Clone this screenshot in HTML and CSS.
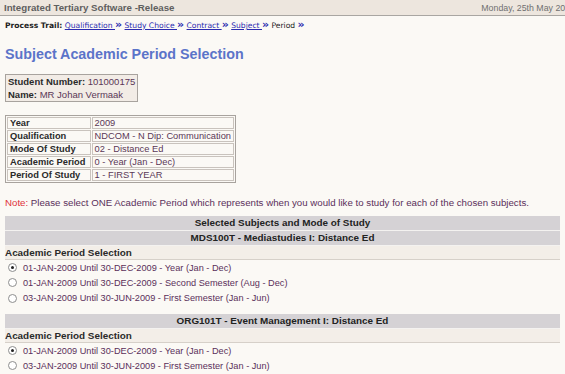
FILE: index.html
```html
<!DOCTYPE html>
<html>
<head>
	<meta charset="utf-8">
	<link rel="stylesheet" href="styles.css">
</head>
<body>
	<!-- top banner -->
	<div class="banner">
		<span class="app-name">Integrated Tertiary Software -Release</span>
		<span class="today">Monday, 25th May 2009</span>
	</div>

	<!-- process trail -->
	<div class="trail">
		<b>Process Trail:</b>
		<a href="#">Qualification </a><span class="arr">&raquo;</span>
		<a href="#">Study Choice </a><span class="arr">&raquo;</span>
		<a href="#">Contract </a><span class="arr">&raquo;</span>
		<a href="#">Subject </a><span class="arr">&raquo;</span>
		Period <span class="arr">&raquo;</span>
	</div>

	<h1>Subject Academic Period Selection</h1>

	<!-- student -->
	<table class="student">
		<tr><td><b>Student Number:</b> 101000175</td></tr>
		<tr><td><b>Name:</b> MR Johan Vermaak</td></tr>
	</table>

	<!-- enrolment info -->
	<table class="info">
		<tr><th>Year</th><td>2009</td></tr>
		<tr><th>Qualification</th><td>NDCOM - N Dip: Communication</td></tr>
		<tr><th>Mode Of Study</th><td>02 - Distance Ed</td></tr>
		<tr><th>Academic Period</th><td>0 - Year (Jan - Dec)</td></tr>
		<tr><th>Period Of Study</th><td>1 - FIRST YEAR</td></tr>
	</table>

	<p class="note"><span class="red">Note:</span> Please select ONE Academic Period which represents when you would like to study for each of the chosen subjects.</p>

	<!-- subjects -->
	<div class="subjects">
		<div class="bar">Selected Subjects and Mode of Study</div>
		<div class="bar">MDS100T - Mediastudies I: Distance Ed</div>
		<div class="sel-head">Academic Period Selection</div>
		<div class="opt"><span class="radio on"></span>01-JAN-2009 Until 30-DEC-2009 - Year (Jan - Dec)</div>
		<div class="opt"><span class="radio"></span>01-JAN-2009 Until 30-DEC-2009 - Second Semester (Aug - Dec)</div>
		<div class="opt"><span class="radio"></span>03-JAN-2009 Until 30-JUN-2009 - First Semester (Jan - Jun)</div>

		<div class="bar gap">ORG101T - Event Management I: Distance Ed</div>
		<div class="sel-head">Academic Period Selection</div>
		<div class="opt"><span class="radio on"></span>01-JAN-2009 Until 30-DEC-2009 - Year (Jan - Dec)</div>
		<div class="opt"><span class="radio"></span>03-JAN-2009 Until 30-JUN-2009 - First Semester (Jan - Jun)</div>
	</div>
</body>
</html>
```

FILE: styles.css
```css
body {
	margin: 0;
	background-color: #fbf9f5;
	font-family: "Liberation Sans", Arial, sans-serif;
	font-size: 9px;
	color: #222;
	overflow: hidden;
}

/* top banner */
.banner {
	display: flex;
	justify-content: space-between;
	align-items: center;
	height: 15px;
	padding-left: 4px;
	background-color: #ede6de;
	border-bottom: 1px solid #a9a6a2;
	white-space: nowrap;
	overflow: hidden;
}

.app-name {
	font-size: 9.7px;
	font-weight: bold;
	color: #5f5f5f;
}

.today {
	font-size: 8.8px;
	color: #707070;
	margin-right: -10px;
}

/* process trail */
.trail {
	font-family: "DejaVu Sans", Verdana, sans-serif;
	font-size: 7.6px;
	padding: 4px 0 0 5px;
	color: #222;
	height: 13px;
}

.trail a {
	color: #2b2bb0;
}

.trail .arr {
	font-weight: bold;
	font-size: 11px;
	line-height: 9px;
	color: #2b2bb0;
}

h1 {
	font-size: 14.3px;
	color: #5b74c9;
	margin: 11px 0 0 5px;
	line-height: 20px;
}

/* student box */
.student {
	margin: 10px 0 0 5px;
	border: 1px solid #a8a39e;
	background-color: #f2ece6;
	border-collapse: collapse;
	color: #5a3756;
}

.student td {
	padding: 0 2px;
	line-height: 13px;
	font-size: 9.5px;
}

.student b, .info th {
	color: #2a2a2a;
}

/* info table */
.info {
	margin: 13px 0 0 5px;
	border: 1px solid #a8a39e;
	border-spacing: 1px;
	color: #5a3756;
	width: 231px;
	font-size: 9.3px;
}

.info th, .info td {
	border: 1px solid #c9c3bd;
	padding: 0 2px;
	height: 10px;
	line-height: 10px;
	text-align: left;
	white-space: nowrap;
}

.info th {
	width: 78px;
}

.note {
	margin: 14px 0 0 5px;
	font-size: 9.7px;
	line-height: 12px;
	color: #5a2f5a;
	white-space: nowrap;
}

.red {
	color: #e0303a;
}

/* subjects */
.subjects {
	margin: 7px 5px 0 5px;
}

.bar {
	background-color: #d5d2d5;
	border-bottom: 1px solid #f4f2f0;
	text-align: center;
	font-size: 9.9px;
	font-weight: bold;
	line-height: 14px;
	color: #222;
}

.bar.gap {
	margin-top: 8px;
}

.sel-head {
	font-size: 9.9px;
	font-weight: bold;
	line-height: 13px;
	color: #2a2a2a;
	background-color: #f3eee8;
	border-bottom: 1px solid #d6d0c9;
}

.opt {
	display: flex;
	align-items: center;
	height: 15.3px;
	padding-left: 3px;
	font-size: 9.2px;
	color: #5a2f5a;
}

.radio {
	width: 7px;
	height: 7px;
	border: 1px solid #8e8e8e;
	border-radius: 50%;
	background-color: #fff;
	margin-right: 6px;
	position: relative;
}

.radio.on::after {
	content: "";
	position: absolute;
	left: 2px;
	top: 2px;
	width: 3px;
	height: 3px;
	border-radius: 50%;
	background-color: #222;
}
```
